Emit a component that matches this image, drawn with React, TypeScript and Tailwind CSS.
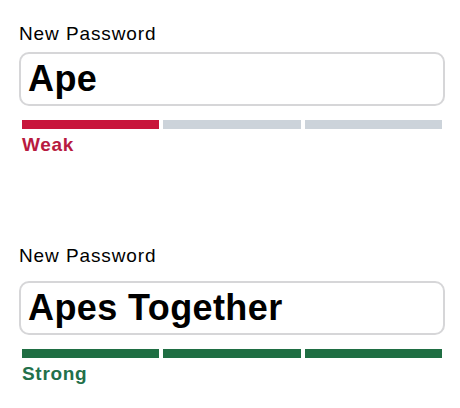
import React from 'react';

type Strength = 'weak' | 'strong';

const meter: Record<Strength, { label: string; filled: number; bar: string; text: string }> = {
  weak: { label: 'Weak', filled: 1, bar: 'bg-[#c8153b]', text: 'text-[#b81a40]' },
  strong: { label: 'Strong', filled: 3, bar: 'bg-[#1f6e43]', text: 'text-[#22704a]' },
};

function PasswordField({ value, strength, gap }: { value: string; strength: Strength; gap: string }) {
  const m = meter[strength];
  return (
    <div className="flex flex-col">
      <label className="text-[19px] leading-[22px] tracking-[0.9px] text-black">New Password</label>
      <div
        className={`${gap} h-[54px] flex items-center rounded-[10px] border-2 border-[#d6d6d8] bg-white px-[7px]`}
      >
        <span className="text-[36px] leading-[36px] font-bold tracking-[0.4px] text-black">{value}</span>
      </div>
      <div className="mt-[14px] mx-[3px] grid grid-cols-3 gap-[4px]">
        {[0, 1, 2].map((i) => (
          <div key={i} className={`h-[9px] ${i < m.filled ? m.bar : 'bg-[#ccd3da]'}`} />
        ))}
      </div>
      <span className={`mt-[5px] ml-[3px] text-[19px] leading-[22px] tracking-[0.7px] font-bold ${m.text}`}>
        {m.label}
      </span>
    </div>
  );
}

export default function App() {
  return (
    <main
      className="w-[460px] h-[408px] bg-white pl-[19px] pr-[15px] pt-[23px]"
      style={{ fontFamily: '"Liberation Sans", Arial, sans-serif' }}
    >
      <PasswordField value="Ape" strength="weak" gap="mt-[7px]" />
      <div className="mt-[89px]">
        <PasswordField value="Apes Together" strength="strong" gap="mt-[14px]" />
      </div>
    </main>
  );
}
